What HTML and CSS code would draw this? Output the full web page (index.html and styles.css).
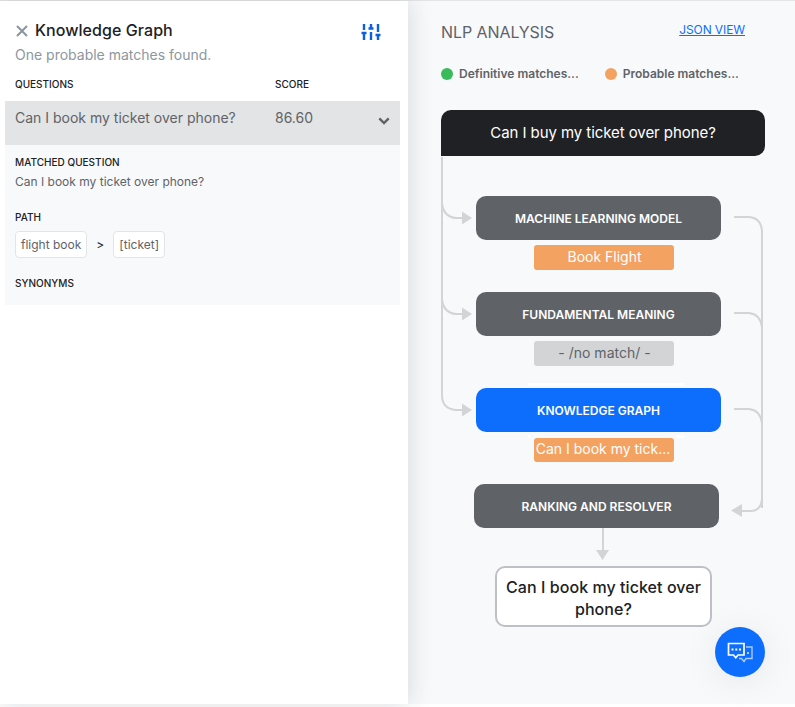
FILE: index.html
```html
<!DOCTYPE html>
<html lang="en">
<head>
<meta charset="utf-8">
<title>NLP Analysis</title>
<link rel="stylesheet" href="styles.css">
</head>
<body>
<div class="app">
  <section class="details">
    <header class="details-head">
      <svg class="close" width="12" height="12" viewBox="0 0 12 12"><path d="M1 1L11 11M11 1L1 11"/></svg>
      <h1><span>Knowledge Graph</span></h1>
      <svg class="sliders" width="20" height="18" viewBox="0 0 20 18"><path d="M3 1V7M3 11V17M.5 10H5.500M10 1V6M10 9V17M7.500 5.500H12.500M17 1V9M17 12V17M14.500 12H19.500"/></svg>
    </header>
    <p class="summary"><span>One probable matches found.</span></p>
    <div class="columns"><span>QUESTIONS</span><span>SCORE</span></div>
    <div class="result">
      <span>Can I book my ticket over phone?</span><span>86.60</span>
      <svg class="chevron" width="12" height="8" viewBox="0 0 12 8"><path d="M1.300 1.300L6 6L10.700 1.300"/></svg>
    </div>
    <div class="expanded">
      <h2>MATCHED QUESTION</h2>
      <p class="matched">Can I book my ticket over phone?</p>
      <h2>PATH</h2>
      <div class="path"><span class="tag">flight book</span><span class="gt">&gt;</span><span class="tag">[ticket]</span></div>
      <h2>SYNONYMS</h2>
    </div>
  </section>
  <section class="analysis">
    <header class="analysis-head"><h1>NLP ANALYSIS</h1><a href="#">JSON VIEW</a></header>
    <div class="legend">
      <span class="key"><i class="dot definitive"></i>Definitive matches...</span>
      <span class="key"><i class="dot probable"></i>Probable matches...</span>
    </div>
    <div class="diagram">
      <svg class="wires" width="324" height="458" viewBox="0 0 324 458">
        <g class="lines">
          <path d="M1 47V285Q1 299 15 300H22"/>
          <path d="M1 94Q3 107 15 108H22"/>
          <path d="M1 190Q3 203 15 204H22"/>
          <path d="M293 107H308Q320 108 321 121V398"/>
          <path d="M293 203H308Q319 204 321 217"/>
          <path d="M293 299H308Q319 300 321 313"/>
          <path d="M321 389Q320 400 311 401H300"/>
          <path d="M162 418V442"/>
        </g>
        <g class="heads">
          <path d="M21 101.500L31 108L21 114.500Z"/>
          <path d="M21 197.500L31 204L21 210.500Z"/>
          <path d="M21 293.500L31 300L21 306.500Z"/>
          <path d="M301 394L290 400.500L301 407Z"/>
          <path d="M155 440H168L161.500 450Z"/>
        </g>
      </svg>
      <div class="query">Can I buy my ticket over phone?</div>
      <div class="stage"><div class="node">MACHINE LEARNING MODEL</div><div class="outcome">Book Flight</div></div>
      <div class="stage"><div class="node">FUNDAMENTAL MEANING</div><div class="outcome none">- /no match/ -</div></div>
      <div class="stage selected"><div class="node">KNOWLEDGE GRAPH</div><div class="outcome">Can I book my tick...</div></div>
      <div class="node resolver">RANKING AND RESOLVER</div>
      <div class="answer">Can I book my ticket over phone?</div>
    </div>
  </section>
  <button class="chat" aria-label="Chat">
    <svg width="26" height="22" viewBox="0 0 26 22"><path class="front" d="M1.500 2.500H17V14H11L8.800 16.700L6.500 14H1.500Z"/><path class="dots" d="M4.500 8.500H6.500M8.300 8.500H10.300M12 8.500H14"/><path class="back" d="M19 6H25V17.500H19L17 20.500L14.500 17.500H12"/><path class="back-dot" d="M20 12H22"/></svg>
  </button>
</div>
</body>
</html>
```
FILE: styles.css
```css
* { box-sizing: border-box; }
body { margin: 0; height: 707px; overflow: hidden; background: #fff; color: #202124; font-family: Inter, sans-serif; font-size: 14px; }
h1, h2, p { margin: 0; font-weight: 400; }
svg { display: block; fill: none; }

.app { position: relative; display: flex; width: 795px; height: 704px; border-top: 1px solid #e4e5e7; background: #f8f9fb; }

.details { width: 408px; flex: none; padding: 0 8px 0 5px; background: #fff; box-shadow: 0 0 24px rgba(32, 39, 53, .17); }
.details-head { display: flex; align-items: center; height: 60px; padding: 0 19px 0 11px; }
.details-head h1 { flex: 1; margin: -2px 0 0 7px; font-size: 16px; font-weight: 500; letter-spacing: .06px; }
.close path { stroke: #8c959e; stroke-width: 2; }
.sliders { margin-top: 2px; }
.sliders path { stroke: #0b5fe0; stroke-width: 2.400; }
.summary { height: 17px; margin-top: -15px; padding-left: 10px; line-height: 17px; color: #8c979f; }
.columns { display: grid; grid-template-columns: 260px auto; margin-top: 13px; padding-left: 10px; font-size: 10px; font-weight: 500; line-height: 16px; }
.result { display: grid; grid-template-columns: 260px 1fr 12px; height: 44px; margin-top: 9px; padding: 8px 10px 0 10px; background: #e3e4e6; color: #5f6368; line-height: 18px; }
.chevron { margin-top: 8px; }
.chevron path { stroke: #5f6368; stroke-width: 2.400; }
.expanded { height: 160px; padding: 10px 10px; background: #f8f9fb; }
.expanded h2 { font-size: 10px; font-weight: 500; line-height: 14px; letter-spacing: .02px; }
.matched { margin: 4px 0 20px; font-size: 12px; line-height: 17px; color: #5f6368; }
.path { display: flex; align-items: center; margin: 7px 0 18px; font-size: 12px; }
.tag { height: 27px; padding: 0 5px; border: 1px solid #e3e4e6; border-radius: 4px; background: #fff; color: #5f6368; line-height: 25px; }
.gt { width: 26px; text-align: center; }

.analysis { flex: 1; padding: 0 30px 0 33px; }
.analysis-head { display: flex; justify-content: space-between; height: 64px; padding: 19px 20px 0 0; color: #5f6368; }
.analysis-head h1 { font-size: 16px; line-height: 24px; letter-spacing: -.08px; }
.analysis-head a { margin-top: 1px; font-size: 12px; line-height: 18px; letter-spacing: -.1px; color: #0d6efd; }
.legend { display: flex; gap: 26px; height: 18px; font-size: 12px; font-weight: 600; line-height: 18px; color: #5f6368; }
.key { display: flex; align-items: center; gap: 6px; white-space: nowrap; }
.dot { width: 12px; height: 12px; border-radius: 50%; }
.definitive { background: #39bb5b; }
.probable { background: #f3a261; }

.diagram { position: relative; width: 324px; margin-top: 27px; }
.wires { position: absolute; top: 0; left: 0; }
.lines { stroke: #d2d4d6; stroke-width: 2; }
.heads { fill: #d2d4d6; }
.query { position: relative; height: 46px; border-radius: 10px 10px 10px 0; background: #202124; color: #fff; font-size: 15px; letter-spacing: -.07px; line-height: 46px; text-align: center; }
.stage { position: relative; width: 245px; height: 96px; margin-left: 35px; }
.query + .stage { margin-top: 40px; }
.node { width: 245px; height: 44px; border-radius: 10px; background: #5f6368; color: #fff; font-size: 12px; font-weight: 600; line-height: 45px; text-align: center; white-space: nowrap; }
.outcome { width: 140px; height: 25px; margin: 5px 0 0 58px; border-radius: 3px; background: #f3a261; color: #fff; line-height: 24px; text-align: center; white-space: nowrap; padding-left: 1px; }
.none { background: #d2d4d6; color: #5f6368; }
.selected .node { background: #0d6efd; }
.selected .outcome { height: 24px; margin-top: 6px; padding: 0 2px 0 0; line-height: 22px; }
.selected::before { content: ""; position: absolute; top: -5px; left: 52px; width: 156px; height: 3px; background: #fff; }
.selected::after { content: ""; position: absolute; top: 47px; left: 52px; width: 156px; height: 3px; background: linear-gradient(90deg, #fff 2px, transparent 2px 148px, #fff 148px); }
.resolver { margin-left: 33px; }
.answer { width: 217px; height: 61px; margin: 38px 0 0 54px; padding: 8px 0; border: 2px solid #bdc1c6; border-radius: 10px; background: #fff; font-size: 16px; font-weight: 500; line-height: 22px; letter-spacing: .06px; text-align: center; }

.chat { position: absolute; right: 30px; bottom: 27px; display: flex; align-items: center; justify-content: center; width: 50px; height: 50px; padding: 0; border: 0; border-radius: 50%; background: #0d6efd; box-shadow: 0 4px 36px rgba(0, 0, 0, .08); }
.front, .dots { stroke: #fff; stroke-width: 1.700; }
.back, .back-dot { stroke: #a8ccff; stroke-width: 1.400; }
.dots, .back-dot { stroke-width: 2; }
```
